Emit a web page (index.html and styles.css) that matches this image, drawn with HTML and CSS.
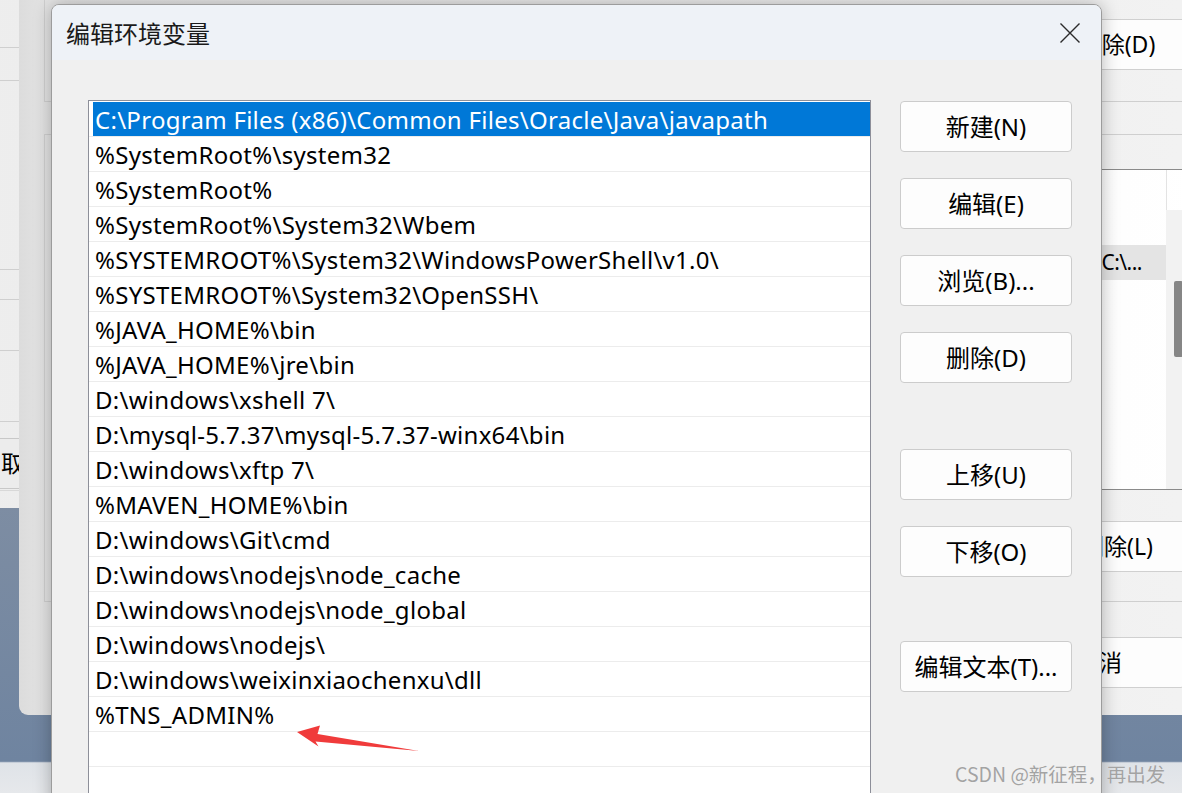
FILE: index.html
```html
<!DOCTYPE html>
<html lang="zh-CN">
<head>
<meta charset="utf-8">
<title>编辑环境变量</title>
<link rel="stylesheet" href="styles.css">
</head>
<body>
<div class="desktop">

  <div class="win sysprops">
    <div class="sp-band sp-b1"></div>
    <div class="sp-band sp-b2"></div>
    <div class="sp-band sp-b3"></div>
    <div class="sp-band sp-b4"></div>
    <div class="sp-band sp-b5"></div>
    <div class="sp-band sp-b6"></div>
    <div class="sp-footer"><div class="wbtn sp-cancel">取消</div></div>
  </div>

  <div class="win envwin">
    <div class="group group-user">
      <div class="wbtn env-btn">删除(D)</div>
    </div>
    <div class="group group-sys">
      <div class="env-list">
        <div class="env-head"><span class="env-col"></span></div>
        <div class="env-body">
          <div class="env-rows">
            <div class="env-row"></div>
            <div class="env-row env-sel"><span class="env-val">C:\...</span></div>
          </div>
          <div class="env-scroll"><div class="env-thumb"></div></div>
        </div>
      </div>
      <div class="wbtn env-btn env-btn-l">删除(L)</div>
    </div>
    <div class="env-foot"><div class="wbtn env-btn">取消</div></div>
  </div>

  <div class="dialog">
    <div class="titlebar">
      <span class="title">编辑环境变量</span>
      <svg class="close" width="22" height="22" viewBox="0 0 22 22" aria-hidden="true"><path d="M1.5 1.5 L20.5 20.5 M20.5 1.5 L1.5 20.5" stroke="#2b2b2b" stroke-width="1.4" fill="none"/></svg>
    </div>
    <div class="dlg-body">
      <div class="listbox">
        <div class="row sel"><span class="cell">C:\Program Files (x86)\Common Files\Oracle\Java\javapath</span></div>
        <div class="row"><span class="cell">%SystemRoot%\system32</span></div>
        <div class="row"><span class="cell">%SystemRoot%</span></div>
        <div class="row"><span class="cell">%SystemRoot%\System32\Wbem</span></div>
        <div class="row"><span class="cell">%SYSTEMROOT%\System32\WindowsPowerShell\v1.0\</span></div>
        <div class="row"><span class="cell">%SYSTEMROOT%\System32\OpenSSH\</span></div>
        <div class="row"><span class="cell">%JAVA_HOME%\bin</span></div>
        <div class="row"><span class="cell">%JAVA_HOME%\jre\bin</span></div>
        <div class="row"><span class="cell">D:\windows\xshell 7\</span></div>
        <div class="row"><span class="cell">D:\mysql-5.7.37\mysql-5.7.37-winx64\bin</span></div>
        <div class="row"><span class="cell">D:\windows\xftp 7\</span></div>
        <div class="row"><span class="cell">%MAVEN_HOME%\bin</span></div>
        <div class="row"><span class="cell">D:\windows\Git\cmd</span></div>
        <div class="row"><span class="cell">D:\windows\nodejs\node_cache</span></div>
        <div class="row"><span class="cell">D:\windows\nodejs\node_global</span></div>
        <div class="row"><span class="cell">D:\windows\nodejs\</span></div>
        <div class="row"><span class="cell">D:\windows\weixinxiaochenxu\dll</span></div>
        <div class="row"><span class="cell">%TNS_ADMIN%</span></div>
        <div class="row"><span class="cell"></span></div>
        <div class="row"><span class="cell"></span></div>
      </div>
      <div class="btncol">
        <div class="wbtn">新建(N)</div>
        <div class="wbtn">编辑(E)</div>
        <div class="wbtn">浏览(B)...</div>
        <div class="wbtn">删除(D)</div>
        <div class="wbtn gap-up">上移(U)</div>
        <div class="wbtn">下移(O)</div>
        <div class="wbtn gap-text">编辑文本(T)...</div>
      </div>
    </div>
  </div>

  <svg class="arrow" width="130" height="32" viewBox="290 722 130 32" aria-hidden="true">
    <polygon points="297,732 320,725.5 317.5,734 419,751 315.5,741.5 318.5,746.5" fill="#f03b3b"/>
  </svg>

  <div class="watermark">CSDN @新征程，再出发</div>
</div>
</body>
</html>
```

FILE: styles.css
```css
* { box-sizing: border-box; }

html, body {
  margin: 0;
  padding: 0;
}

body {
  width: 1182px;
  height: 793px;
  overflow: hidden;
  font-family: "Noto Sans", "Noto Sans CJK SC", sans-serif;
  color: #000;
}

.desktop {
  position: relative;
  width: 1182px;
  height: 793px;
  overflow: hidden;
  background: linear-gradient(180deg, #8f8f91 0%, #7f8ea3 60%, #6f84a0 96%, #dfe3e8 96.2%, #e6e8eb 100%);
}

/* generic window button */
.wbtn {
  height: 51px;
  width: 172px;
  display: flex;
  align-items: center;
  justify-content: center;
  background: #fdfdfd;
  border: 1px solid #d0d0d0;
  border-radius: 4px;
  font-size: 24px;
  line-height: 1;
  color: #000;
  white-space: nowrap;
}

/* ---------- System properties window (far left, behind) ---------- */
.win {
  position: absolute;
}

.sysprops {
  left: -400px;
  top: -52px;
  width: 600px;
  height: 560px;
  background: linear-gradient(90deg, #f2f2f2 0%, #ebebeb 100%);
  display: flex;
  flex-direction: column;
}

.sp-band { border-bottom: 1px solid #cfcfcf; flex: none; }
.sp-b1 { height: 100px; }
.sp-b2 { height: 33px; }
.sp-b3 { height: 189px; }
.sp-b4 { height: 30px; }
.sp-b5 { height: 51px; }
.sp-b6 { height: 71px; }

.sp-footer {
  padding-top: 16px;
  padding-left: 337px;
  border-bottom: 1px solid #d8d8d8;
  height: 69px;
}

.sp-cancel {
  background: #ececec;
  border-color: #c8c8c8;
  justify-content: flex-start;
  padding-left: 63px;
  font-size: 23px;
}

/* ---------- Environment variables window (behind dialog) ---------- */
.envwin {
  left: 19px;
  top: -100px;
  width: 1240px;
  height: 815px;
  border-radius: 0 0 9px 9px;
  background: linear-gradient(90deg, #dcdcdc 0%, #e4e4e4 2.5%, #f3f3f3 100%);
  padding-left: 25px;
  display: flex;
  flex-direction: column;
}

.group {
  border: 1px solid #cfcfcf;
  border-right: none;
  display: flex;
  flex-direction: column;
  align-items: flex-end;
}

.group-user {
  margin-top: 40px;
  height: 162px;
  padding-top: 78px;
  padding-right: 56px;
}

.env-btn {
  font-size: 23px;
}

.group-sys {
  margin-top: 32px;
  height: 468px;
  padding-top: 34px;
  padding-right: 56px;
}

.env-list {
  align-self: stretch;
  margin-left: 16px;
  margin-right: 4px;
  height: 321px;
  border: 1px solid #8a8a8a;
  border-right: none;
  background: linear-gradient(90deg, #f0f0f0 0%, #ffffff 100%);
  display: flex;
  flex-direction: column;
}

.env-head {
  height: 40px;
  display: flex;
  justify-content: flex-end;
  padding-right: 32px;
}

.env-col {
  width: 1px;
  height: 40px;
  background: #e3e3e3;
}

.env-body {
  flex: 1;
  display: flex;
}

.env-rows {
  flex: 1;
}

.env-row {
  height: 35px;
}

.env-sel {
  background: #e4e4e4;
  display: flex;
  align-items: center;
  justify-content: flex-end;
  padding-right: 24px;
  font-size: 21px;
  line-height: 1;
  white-space: nowrap;
}

.env-val { letter-spacing: -0.5px; }

.env-scroll {
  width: 33px;
  background: #f2f2f2;
  padding: 71px 0 0 8px;
}

.env-thumb {
  width: 9px;
  height: 76px;
  background: #868686;
  border-radius: 2px;
}

.env-btn-l {
  margin-top: 31px;
}

.env-foot {
  display: flex;
  justify-content: flex-end;
  padding: 35px 74px 0 0;
}

/* ---------- Main dialog ---------- */
.dialog {
  position: absolute;
  left: 51px;
  top: 4px;
  width: 1051px;
  height: 900px;
  border: 1px solid #9c9c9c;
  border-radius: 8px 8px 0 0;
  background: #f0f0f0;
  box-shadow: 0 0 18px rgba(0, 0, 0, 0.28);
  overflow: hidden;
}

.titlebar {
  height: 55px;
  background: #eef2f7;
  display: flex;
  align-items: center;
  justify-content: space-between;
  padding: 0 20px 0 14px;
}

.title {
  font-family: "Noto Sans CJK SC", sans-serif;
  font-size: 24px;
  color: #1a1a1a;
  line-height: 1;
}

.close { display: block; }

.dlg-body {
  display: flex;
  align-items: flex-start;
  padding: 40px 0 0 36px;
  gap: 29px;
}

.listbox {
  width: 783px;
  height: 800px;
  background: #fff;
  border: 1px solid #8d8f99;
  padding-top: 1px;
}

.row {
  height: 35px;
  border-bottom: 1px solid #ececec;
  display: flex;
}

.cell {
  flex: 1;
  margin-left: 4px;
  padding-left: 2px;
  padding-top: 2px;
  display: flex;
  align-items: center;
  font-size: 24px;
  letter-spacing: 0.28px;
  line-height: 1;
  white-space: nowrap;
}

.row.sel .cell {
  background: #0078d7;
  color: #fff;
}

.btncol {
  display: flex;
  flex-direction: column;
  gap: 26px;
  padding-top: 1px;
}

.btncol .wbtn {
  border-color: #cccccc;
}

.gap-up { margin-top: 40px; }
.gap-text { margin-top: 38px; }

/* ---------- overlays ---------- */
.arrow {
  position: absolute;
  left: 290px;
  top: 722px;
}

.watermark {
  position: absolute;
  left: 955px;
  top: 760px;
  font-family: "Noto Sans CJK SC", sans-serif;
  font-size: 19.5px;
  color: #a3a3a3;
  line-height: 28px;
  white-space: nowrap;
  text-shadow: 0 0 1px rgba(255, 255, 255, 0.6);
}
```
